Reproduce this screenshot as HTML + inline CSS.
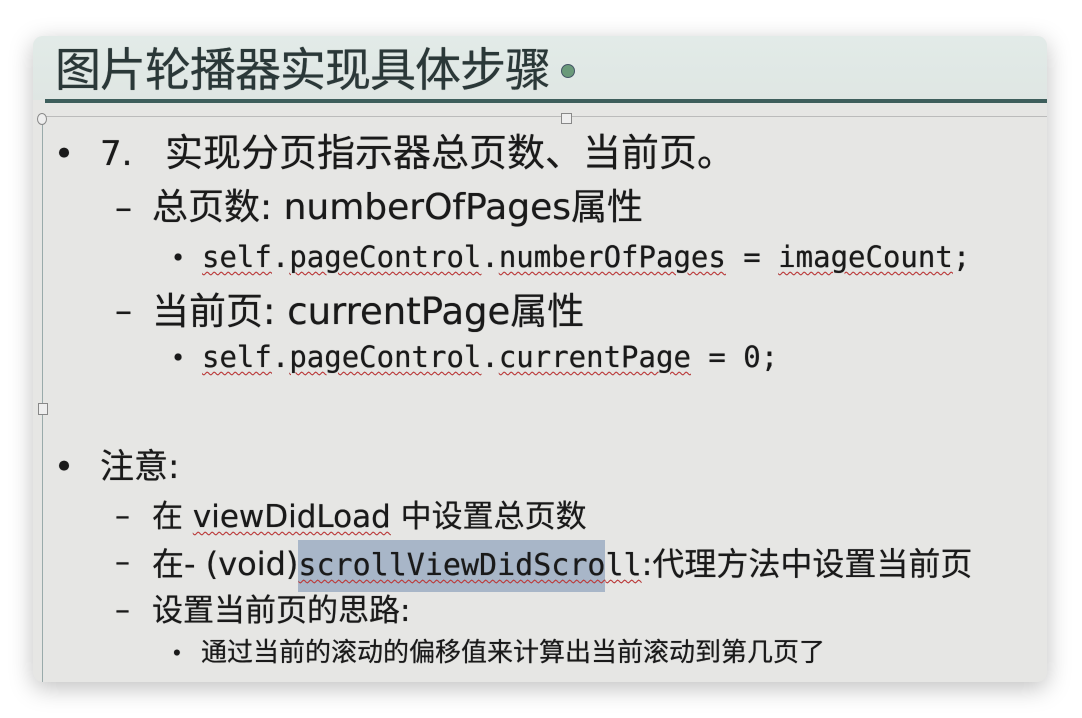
<!DOCTYPE html>
<html><head><meta charset="utf-8"><style>
body{margin:0;width:1082px;height:718px;background:#fff;position:relative;overflow:hidden;font-family:"DejaVu Sans","Noto Sans CJK SC",sans-serif;color:#1a1a1a}
.card{position:absolute;left:33px;top:36px;width:1014px;height:646px;background:#e6e6e4;border-radius:10px;box-shadow:0 6px 24px rgba(0,0,0,.25);overflow:hidden}
.ttl{position:absolute;left:0;top:0;width:1014px;height:64px;background:linear-gradient(#e2ebe8,#dfe6e3)}
.t{position:absolute;white-space:nowrap;line-height:1;text-shadow:0 0 .6px #222}
.mono{font-family:"DejaVu Sans Mono","Noto Sans CJK SC",monospace}
.u{text-decoration:underline wavy #d04040;text-decoration-thickness:1px;text-underline-offset:4px}
.hl{background:#a8b6c8;padding:8px 0 9px}
</style></head><body>
<div class="card">
<div class="ttl"></div>
<div class="t" style="left:22px;top:8px;font-size:46px;color:#2a3838;letter-spacing:-1px;font-family:'Noto Sans CJK SC',sans-serif">图片轮播器实现具体步骤</div>
<div style="position:absolute;left:528px;top:28px;width:12px;height:12px;border-radius:50%;background:#6a9a7a;border:1px solid #456"></div>
<div style="position:absolute;left:12px;top:63px;width:1002px;height:4px;background:#3e5e5c"></div>
<div style="position:absolute;left:12px;top:80px;width:1002px;height:1px;background:#bbb"></div>
<div style="position:absolute;left:9px;top:80px;width:1px;height:566px;background:#9aa"></div>
<div style="position:absolute;left:4px;top:77px;width:8px;height:10px;border:1px solid #888;border-radius:50%;background:#eee"></div>
<div style="position:absolute;left:528px;top:77px;width:9px;height:9px;border:1px solid #888;background:#eee"></div>
<div style="position:absolute;left:5px;top:367px;width:8px;height:10px;border:1px solid #888;background:#eee"></div>

<div class="t" style="left:21px;top:101px;font-size:34px">•</div>
<div class="t" style="left:67px;top:101px;font-size:34px">7.</div>
<div class="t" style="left:132px;top:98px;font-size:38px">实现分页指示器总页数、当前页。</div>
<div class="t" style="left:82px;top:155px;font-size:34px">–</div>
<div class="t" style="left:119px;top:154px;font-size:36px">总页数: numberOfPages属性</div>
<div class="t" style="left:138px;top:210px;font-size:24px">•</div>
<div class="t mono" style="left:169px;top:207px;font-size:29px"><span class="u">self</span>.<span class="u">pageControl</span>.<span class="u">numberOfPages</span> = <span class="u">imageCount</span>;</div>
<div class="t" style="left:82px;top:258px;font-size:34px">–</div>
<div class="t" style="left:119px;top:257px;font-size:37px">当前页: currentPage属性</div>
<div class="t" style="left:138px;top:310px;font-size:24px">•</div>
<div class="t mono" style="left:169px;top:307px;font-size:29px"><span class="u">self</span>.<span class="u">pageControl</span>.<span class="u">currentPage</span> = 0;</div>
<div class="t" style="left:21px;top:414px;font-size:34px">•</div>
<div class="t" style="left:67px;top:414px;font-size:34px">注意:</div>
<div class="t" style="left:82px;top:466px;font-size:30px">–</div>
<div class="t" style="left:119px;top:466px;font-size:31px">在 <span class="u">viewDidLoad</span> 中设置总页数</div>
<div class="t" style="left:82px;top:512px;font-size:30px">–</div>
<div class="t" style="left:119px;top:512px;font-size:32px">在- (void)<span class="mono u" style="font-size:30px"><span class="hl">scrollViewDidScro</span>ll</span>:代理方法中设置当前页</div>
<div class="t" style="left:82px;top:560px;font-size:30px">–</div>
<div class="t" style="left:119px;top:560px;font-size:31px">设置当前页的思路:</div>
<div class="t" style="left:138px;top:607px;font-size:20px">•</div>
<div class="t" style="left:168px;top:604px;font-size:26px">通过当前的滚动的偏移值来计算出当前滚动到第几页了</div>
</div>
</body></html>
